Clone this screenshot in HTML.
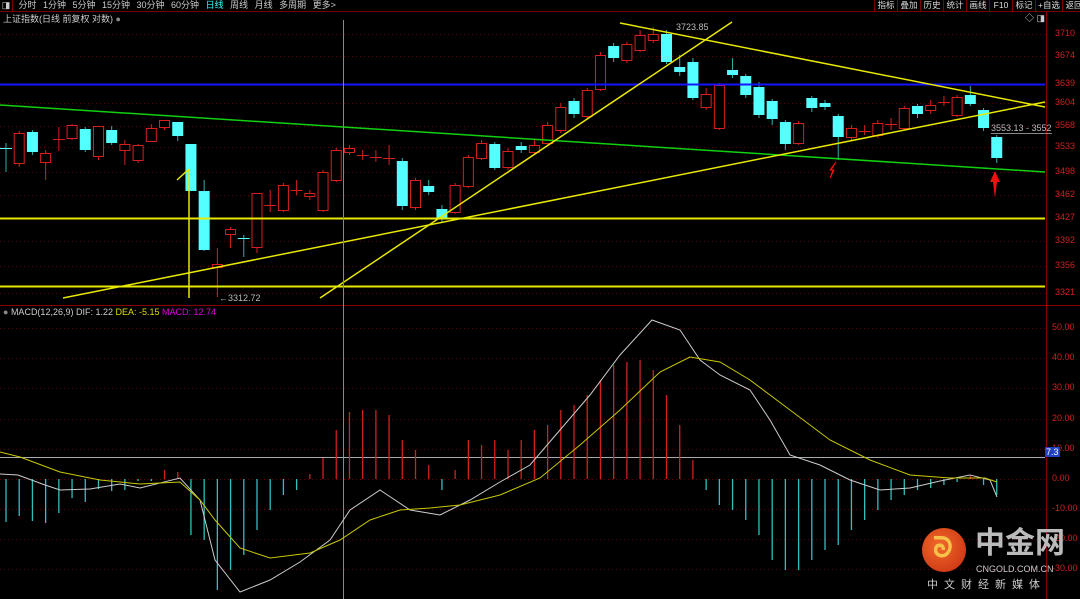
<!DOCTYPE html>
<html><head><meta charset="utf-8"><style>
html,body{margin:0;padding:0;background:#000;width:1080px;height:599px;overflow:hidden;font-family:"Liberation Sans","Noto Sans CJK SC",sans-serif}
svg{position:absolute;left:0;top:0}
.t{position:absolute;font-size:9px;white-space:nowrap}
.b{display:inline-block;border-left:1px solid #7a0000;padding:0 2px;width:18px;text-align:center}
</style></head><body>
<svg id="s" width="1080" height="599" xmlns="http://www.w3.org/2000/svg"></svg>
<div class="t" style="left:0;top:0;width:1080px;height:11px;border-bottom:1px solid #7a0000;color:#ccc;font-size:9px;line-height:11px">
<span style="display:inline-block;width:12px;border-right:1px solid #7a0000;text-align:center">◨</span>
<span style="margin-left:3px;word-spacing:4px">分时 1分钟 5分钟 15分钟 30分钟 60分钟 <span style="color:#3ff">日线</span> 周线 月线 多周期 更多&gt;</span>
</div>
<div class="t" style="left:874px;top:0;color:#ddd;line-height:11px;background:#000;font-size:8.5px">
<span class="b">指标</span><span class="b">叠加</span><span class="b">历史</span><span class="b">统计</span><span class="b">画线</span><span class="b">F10</span><span class="b">标记</span><span class="b" style="width:22px">+自选</span><span class="b">返回</span>
</div>
<div class="t" style="left:3px;top:12px;color:#ccc">上证指数(日线 前复权 对数) <span style="color:#888">●</span></div>
<div class="t" style="left:1025px;top:11px;color:#ccc">◇ ◨</div>
<div class="t" style="left:3px;top:307px;color:#ccc"><span style="color:#888">●</span> MACD(12,26,9) DIF: 1.22 <span style="color:#dd0">DEA: -5.15</span> <span style="color:#d0d">MACD: 12.74</span></div>
<div class="t" style="left:676px;top:22px;color:#bbb">3723.85</div>
<div class="t" style="left:219px;top:293px;color:#bbb">←3312.72</div>
<div class="t" style="left:991px;top:123px;color:#bbb;border-bottom:1px solid #888">3553.13 - 3552</div>
<div id="ax"></div>
<div style="position:absolute;left:922px;top:528px;width:44px;height:44px;border-radius:50%;background:radial-gradient(circle at 40% 40%,#f06a2a,#c52a10)"></div>
<div class="t" style="left:933px;top:532px;font-size:28px;color:#f7c24a;font-weight:bold">ᘐ</div>
<div class="t" style="left:975px;top:528px;font-size:30px;line-height:32px;color:#bbb;font-weight:bold">中金网</div>
<div class="t" style="left:976px;top:564px;font-size:9px;color:#ccc">CNGOLD.COM.CN</div>
<div class="t" style="left:927px;top:576px;font-size:11px;color:#ccc;letter-spacing:6px">中文财经新媒体</div>
<script>
const s=document.getElementById('s');let h='';
const L=(a,b,c,d,col,w,ex)=>h+=`<line x1="${a}" y1="${b}" x2="${c}" y2="${d}" stroke="${col}" stroke-width="${w||1}" ${ex||''}/>`;
[34,56,84,103,126,147,172,195,218,241,266,293].forEach(y=>L(0,y+.5,1045,y+.5,'#5a0000',1,'stroke-dasharray="1 3"'));
[328,358,388,419,449,509,539,569].forEach(y=>L(0,y+.5,1045,y+.5,'#5a0000',1,'stroke-dasharray="1 3"'));
L(0,479.5,1045,479.5,'#5a0000',1,'stroke-dasharray="1 3"');
L(1046.5,12,1046.5,599,'#8a0000');L(0,305.5,1080,305.5,'#8a0000');
let ax='';
[[34,3710],[56,3674],[84,3639],[103,3604],[126,3568],[147,3533],[172,3498],[195,3462],[218,3427],[241,3392],[266,3356],[293,3321]].forEach(([y,v])=>ax+=`<div class="t" style="left:1055px;top:${y-6}px;color:#d02020">${v}</div>`);
[[328,'50.00'],[358,'40.00'],[388,'30.00'],[419,'20.00'],[449,'10.00'],[479,'0.00'],[509,'-10.00'],[539,'-20.00'],[569,'-30.00']].forEach(([y,v])=>ax+=`<div class="t" style="left:1052px;top:${y-6}px;color:#d02020">${v}</div>`);
ax+=`<div class="t" style="left:1045px;top:447px;background:#2040c0;color:#fff;padding:0 1px">7.3</div>`;
document.getElementById('ax').innerHTML=ax;
const C=[[148,148,143,172,'c'],[133,163,131,167,'r'],[132,152,130,155,'c'],[153,162,150,180,'r'],[139,139,127,151,'r'],[125,138,124,140,'r'],[129,150,127,152,'c'],[126,156,126,160,'r'],[130,143,126,145,'c'],[144,150,140,165,'r'],[145,160,144,163,'r'],[128,141,124,142,'r'],[120,127,120,130,'r'],[122,136,122,141,'c'],[144,191,144,191,'c'],[191,250,180,251,'c'],[264,267,248,297,'r'],[229,234,227,248,'r'],[238,238,235,257,'c'],[193,247,193,253,'r'],[205,205,190,212,'r'],[185,210,183,212,'r'],[190,190,180,195,'r'],[193,196,190,200,'r'],[172,210,170,212,'r'],[150,180,148,182,'r'],[148,152,145,155,'r'],[155,155,150,160,'r'],[157,158,150,162,'r'],[158,158,145,165,'r'],[161,206,158,210,'c'],[180,207,178,210,'r'],[186,192,180,195,'c'],[209,218,205,222,'c'],[185,212,183,214,'r'],[157,186,155,188,'r'],[143,158,140,160,'r'],[144,168,142,170,'c'],[151,167,148,170,'r'],[146,150,142,153,'c'],[145,152,140,155,'r'],[125,143,122,146,'r'],[107,130,103,133,'r'],[101,114,98,118,'c'],[90,116,88,118,'r'],[55,89,52,91,'r'],[46,58,43,62,'c'],[44,60,42,63,'r'],[35,50,30,52,'r'],[34,40,27,43,'r'],[34,62,30,64,'c'],[67,72,55,76,'c'],[62,98,58,100,'c'],[94,107,88,110,'r'],[85,128,83,130,'r'],[70,75,58,78,'c'],[76,95,74,98,'c'],[87,115,82,118,'c'],[101,119,99,125,'c'],[122,144,120,150,'c'],[123,143,121,145,'r'],[98,108,96,112,'c'],[103,107,100,110,'c'],[116,137,114,160,'c'],[128,137,125,140,'r'],[131,131,125,135,'r'],[123,135,120,138,'r'],[124,124,118,130,'r'],[108,128,106,130,'r'],[106,114,104,118,'c'],[105,110,100,114,'r'],[102,102,96,106,'r'],[97,115,95,117,'r'],[95,104,86,106,'c'],[110,128,108,131,'c'],[137,158,135,163,'c']];
const SP=13.21;
C.forEach((k,i)=>{const x=6+i*SP;const col=k[4]=='c'?'#54ffff':'#d62020';
L(x,k[2],x,k[3],k[4]=='c'?'#30b0b0':col);
if(k[1]-k[0]<2)L(x-6,k[0]+.5,x+6,k[0]+.5,col);
else if(k[4]=='c')h+=`<rect x="${x-5.5}" y="${k[0]}" width="11" height="${k[1]-k[0]}" fill="${col}"/>`;
else h+=`<rect x="${x-5}" y="${k[0]+.5}" width="10" height="${k[1]-k[0]}" fill="#000" stroke="${col}"/>`;});
L(0,84.5,1045,84.5,'#1414ff',2);L(0,218.5,1045,218.5,'#e8e800',2);L(0,286.5,1045,286.5,'#e8e800',2);
L(0,105,1045,172,'#10d010',1.5);
L(63,298,1045,102,'#e8e800',1.5);L(320,298,732,22,'#e8e800',1.5);L(620,23,1045,107,'#e8e800',1.5);
L(189,170,189,298,'#e8e800',1.5);L(177,180,189,169,'#e8e800',1.5);
L(343.5,20,343.5,599,'#888',1);
h+=`<path d="M836 162 L830 170 L833 170 L830 178 L834 170 L831 170 Z" fill="#f01010" stroke="#f01010" stroke-width="1"/>`;
h+=`<path d="M995 171 L990 182 L993 182 L995 198 L997 182 L1000 182 Z" fill="#f01010"/>`;
L(0,457.5,1045,457.5,'#aaa',1);
const M=[522,516,521,523,513,498,502,489,491,490,481,481,470,472,535,540,590,570,555,530,510,495,490,474,458,430,412,410,410,415,440,450,465,490,470,440,445,440,450,440,430,425,410,405,395,380,365,362,360,370,395,425,460,490,505,510,520,535,560,570,570,560,550,545,530,520,510,500,495,490,488,485,482,476,485,495];
M.forEach((v,i)=>{const x=6+i*SP;L(x,479,x,v,v<479?'#d02020':'#30c0c0',1.3);});
const P=(pts,c)=>h+=`<polyline points="${pts}" fill="none" stroke="${c}" stroke-width="1"/>`;
P('0,474 18,475 45,485 60,490 90,489 120,484 140,488 180,478 200,500 215,560 240,592 270,580 300,562 330,540 350,510 380,490 410,510 440,515 470,500 500,482 530,465 560,430 590,395 620,355 652,320 680,330 700,360 720,375 750,390 770,420 790,455 820,465 850,480 880,490 910,488 940,481 970,475 990,480 997,497','#ccc');
P('0,452 20,457 60,472 100,480 140,484 180,482 200,500 215,520 240,548 270,558 310,553 340,540 370,520 400,510 430,508 460,505 500,495 540,478 580,445 620,410 660,372 690,357 720,362 750,380 790,410 830,440 870,460 910,475 950,478 985,478 997,482','#c8c800');
s.innerHTML=h;
</script>
</body></html>
